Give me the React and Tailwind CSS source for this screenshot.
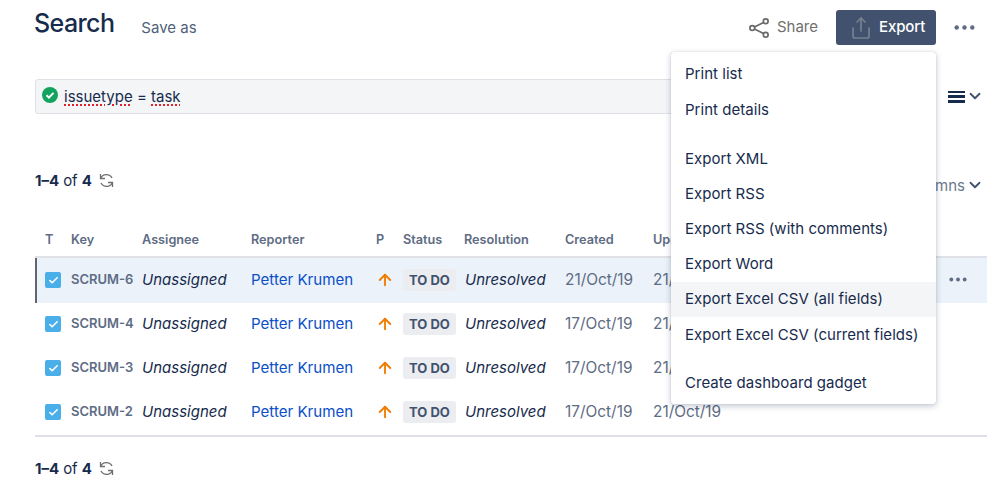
import React from "react";
import { Share, ArrowUp, ChevronDown, Check } from "lucide-react";

const cols = "grid grid-cols-[36px_71px_109px_125px_27px_61px_101px_88px_1fr] items-center";
const rows = [
  ["SCRUM-6", "21/Oct/19", true],
  ["SCRUM-4", "17/Oct/19", false],
  ["SCRUM-3", "17/Oct/19", false],
  ["SCRUM-2", "17/Oct/19", false],
];

function Dots({ cls, w = 21, h = 5 }) {
  return (
    <svg width={w} height={h} viewBox="0 0 21 5" className={cls}>
      <circle cx="2.7" cy="2.5" r="2.2" fill="#5e6c84" />
      <circle cx="10.5" cy="2.5" r="2.2" fill="#5e6c84" />
      <circle cx="18.3" cy="2.5" r="2.2" fill="#5e6c84" />
    </svg>
  );
}

function Refresh() {
  return (
    <svg width="15" height="15" viewBox="0 0 15 15" fill="none" stroke="#6f6f6f" strokeWidth="1.3" className="ml-[7px] -mt-[2px]">
      <path d="M1.5 1v4.5h4.5" />
      <path d="M1.5 5.5A6.4 6.4 0 0 1 13 5" />
      <path d="M13.5 14V9.5H9" />
      <path d="M13.5 9.5A6.4 6.4 0 0 1 2 10" />
    </svg>
  );
}

function Count() {
  return (
    <div className="flex items-center text-[15px] text-[#172b4d]">
      <span className="font-bold">1–4</span>
      <span className="ml-1">of</span>
      <span className="ml-1 font-bold">4</span>
      <Refresh />
    </div>
  );
}

function Item({ children, active }) {
  return (
    <div className={`h-[35.2px] flex items-center pl-[14px] text-[15px] tracking-[0.03px] text-[#172b4d] ${active ? "bg-[#f4f5f7]" : ""}`}>
      {children}
    </div>
  );
}

export default function App() {
  return (
    <div className="relative w-[999px] h-[491px] overflow-hidden bg-white font-['Inter','Liberation_Sans',sans-serif]">
      <div className="pt-[10px] pl-[35px] pr-[12px]">
        {/* header */}
        <div className="flex items-start h-[35px]">
          <h1 className="text-[25px] leading-[26px] font-medium -ml-px text-[#172b4d] tracking-[-0.6px]">Search</h1>
          <span className="ml-[27px] mt-[8px] text-[15px] leading-[20px] text-[#505f79]">Save as</span>
          <div className="ml-auto flex items-center h-[35px]">
            <svg width="20" height="20" viewBox="0 0 20 20" fill="none" stroke="#6b6b6b" strokeWidth="1.7">
              <circle cx="3.3" cy="10" r="2.4" />
              <circle cx="16.7" cy="3.3" r="2.4" />
              <circle cx="16.7" cy="16.7" r="2.4" />
              <path d="M5.5 8.9l9-4.5M5.5 11.1l9 4.5" />
            </svg>
            <span className="ml-[8px] text-[15px] text-[#6f6f6f]">Share</span>
            <button className="ml-[18px] w-[100px] h-[35px] rounded-[3px] bg-[#42526e] flex items-center pl-[13px] text-[15px] text-white font-medium">
              <Share size={24} strokeWidth={1.7} className="text-[#76808f]" />
              <span className="ml-[6px] tracking-[-0.1px]">Export</span>
            </button>
            <Dots cls="ml-[18px] mr-[12px]" />
          </div>
        </div>

        {/* query */}
        <div className="mt-[34px] flex items-center">
          <div className="w-[895px] h-[35px] rounded-[3px] border border-[#dfe1e6] bg-[#f4f5f7] flex items-center pl-[6px]">
            <svg width="16" height="16" viewBox="0 0 16 16" className="-mt-[4px]">
              <circle cx="8" cy="8" r="8" fill="#14a35f" />
              <path d="M4.5 8.3l2.4 2.3 4.6-4.7" stroke="#fff" strokeWidth="2" fill="none" />
            </svg>
            <span className="ml-[6px] pt-px text-[15px] text-[#172b4d]">
              <span className="underline decoration-dotted decoration-[#e0202a] decoration-2 underline-offset-[3px]">issuetype</span>
              {" = "}
              <span className="underline decoration-dotted decoration-[#e0202a] decoration-2 underline-offset-[3px]">task</span>
            </span>
          </div>
          <div className="ml-[18px] flex items-center">
            <div className="w-[17px] h-[12px] flex flex-col justify-between">
              <div className="h-[2.5px] bg-[#172b4d]" />
              <div className="h-[2.5px] bg-[#172b4d]" />
              <div className="h-[2.5px] bg-[#172b4d]" />
            </div>
            <ChevronDown size={18} strokeWidth={2.4} className="ml-px -mt-[2px] text-[#42526e]" />
          </div>
        </div>

        {/* count */}
        <div className="mt-[54px] h-[24px] flex items-center justify-between">
          <div className="pt-[2px]"><Count /></div>
          <div className="flex items-center text-[15px] text-[#6b778c] pr-[3px] pt-[12px]">
            Columns
            <ChevronDown size={18} strokeWidth={2.4} className="ml-px -mt-[2px] text-[#42526e]" />
          </div>
        </div>

        {/* table */}
        <div className="mt-[36px] border-b-2 border-[#dfe1e6] text-[15px]">
          <div className={`${cols} h-[30px] pb-[4px] border-b-2 border-[#dfe1e6] text-[12.7px] font-semibold text-[#5e6c84]`}>
            <div className="pl-[10px]">T</div>
            <div>Key</div>
            <div>Assignee</div>
            <div>Reporter</div>
            <div>P</div>
            <div>Status</div>
            <div>Resolution</div>
            <div>Created</div>
            <div>Updated</div>
          </div>
          {rows.map(([key, date, selected]) => (
            <div key={key} className={`${cols} ${selected ? "h-[45px] pb-[1px] bg-[#ebf2fa] shadow-[inset_2px_0_0_#5f6670]" : "h-[44px] pb-[2px]"}`}>
              <div className="pl-[10px]">
                <div className="w-4 h-4 rounded-[2px] bg-[#4aaee8] flex items-center justify-center">
                  <Check size={11} strokeWidth={3.5} className="text-white" />
                </div>
              </div>
              <div className="text-[13px] font-semibold text-[#5e6c84]">{key}</div>
              <div className="italic text-[#172b4d]">Unassigned</div>
              <div className="text-[15.1px] text-[#0b50c8]">Petter Krumen</div>
              <div><ArrowUp size={18} strokeWidth={2.5} className="text-[#ef7d00]" /></div>
              <div>
                <span className="inline-flex items-center justify-center w-[53px] h-[22px] rounded-[3px] bg-[#ebedf1] text-[13px] font-bold text-[#42526e]">TO DO</span>
              </div>
              <div className="italic pl-px text-[#172b4d]">Unresolved</div>
              <div className="text-[15.4px] text-[#5e6c84]">{date}</div>
              <div className="flex items-center justify-between pr-[20px] text-[15.4px] text-[#5e6c84]">
                <span>21/Oct/19</span>
                {selected && <Dots w={18} h={5} />}
              </div>
            </div>
          ))}
        </div>

        {/* footer */}
        <div className="mt-[21px]">
          <Count />
        </div>
      </div>

      {/* export menu */}
      <div className="absolute left-[671px] top-[52px] w-[265px] h-[352px] rounded-[3px] bg-white pt-[5px] shadow-[0_2px_6px_rgba(9,30,66,0.25),0_0_1px_rgba(9,30,66,0.3)]">
        <Item>Print list</Item>
        <Item>Print details</Item>
        <div className="h-[14px]" />
        <Item>Export XML</Item>
        <Item>Export RSS</Item>
        <Item>Export RSS (with comments)</Item>
        <Item>Export Word</Item>
        <Item active>Export Excel CSV (all fields)</Item>
        <Item>Export Excel CSV (current fields)</Item>
        <div className="h-[13px]" />
        <Item>Create dashboard gadget</Item>
      </div>
    </div>
  );
}
